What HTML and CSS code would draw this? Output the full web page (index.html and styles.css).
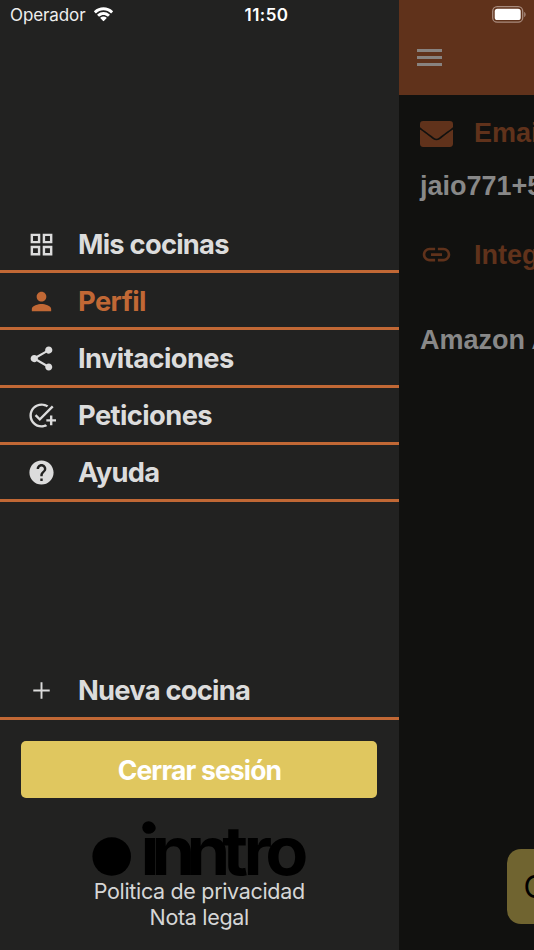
FILE: index.html
```html
<!DOCTYPE html>
<html lang="es">
<head>
<meta charset="utf-8">
<title>inntro</title>
<link rel="stylesheet" href="styles.css">
</head>
<body>
<div class="app">
  <aside class="drawer">
    <nav class="menu">
      <a class="item"><svg class="icon" viewBox="0 0 24 24"><path d="M3 3v8h8V3H3zm6 6H5V5h4v4zm-6 4v8h8v-8H3zm6 6H5v-4h4v4zm4-16v8h8V3h-8zm6 6h-4V5h4v4zm-6 4v8h8v-8h-8zm6 6h-4v-4h4v4z"/></svg><span class="l-mis">Mis cocinas</span></a>
      <a class="item active"><svg class="icon" viewBox="0 0 24 24"><path d="M12 12c2.21 0 4-1.79 4-4s-1.790-4-4-4-4 1.790-4 4 1.790 4 4 4zm0 2c-2.670 0-8 1.340-8 4v2h16v-2c0-2.660-5.330-4-8-4z"/></svg><span class="l-perfil">Perfil</span></a>
      <a class="item"><svg class="icon" viewBox="0 0 24 24"><path d="M18 16.080c-.76 0-1.440.3-1.960.77L8.910 12.700c.05-.23.09-.46.09-.7s-.04-.47-.09-.7l7.050-4.110c.54.5 1.250.81 2.040.81 1.660 0 3-1.340 3-3s-1.340-3-3-3-3 1.340-3 3c0 .24.04.47.09.7L8.040 9.810C7.500 9.310 6.790 9 6 9c-1.660 0-3 1.340-3 3s1.340 3 3 3c.79 0 1.500-.31 2.040-.81l7.120 4.160c-.05.21-.08.43-.08.65 0 1.610 1.310 2.920 2.920 2.920s2.920-1.310 2.920-2.920-1.310-2.920-2.920-2.920z"/></svg><span class="l-inv">Invitaciones</span></a>
      <a class="item"><svg class="icon" viewBox="0 0 24 24"><path d="M22 5.180 10.590 16.600l-4.240-4.240 1.410-1.410 2.830 2.830 10-10L22 5.180zM12 20c-4.410 0-8-3.590-8-8s3.590-8 8-8c1.570 0 3.040.46 4.280 1.250l1.450-1.450C16.100 2.670 14.130 2 12 2 6.480 2 2 6.480 2 12s4.480 10 10 10c1.730 0 3.360-.44 4.780-1.220l-1.500-1.500c-1 .46-2.110.72-3.280.72zm7-5h-3v2h3v3h2v-3h3v-2h-3v-3h-2v3z"/></svg><span class="l-pet">Peticiones</span></a>
      <a class="item"><svg class="icon" viewBox="0 0 24 24"><path d="M12 2C6.480 2 2 6.480 2 12s4.480 10 10 10 10-4.480 10-10S17.520 2 12 2zm1 17h-2v-2h2v2zm2.070-7.750-.9.920C13.450 12.900 13 13.500 13 15h-2v-.5c0-1.100.45-2.100 1.170-2.830l1.240-1.260c.37-.36.59-.86.59-1.410 0-1.100-.9-2-2-2s-2 .9-2 2H8c0-2.210 1.790-4 4-4s4 1.790 4 4c0 .88-.36 1.680-.93 2.250z"/></svg><span class="l-ayuda">Ayuda</span></a>
    </nav>
    <div class="bottom">
      <a class="item"><svg class="icon" viewBox="0 0 24 24"><path d="M18.800 12.800h-6v6h-1.600v-6h-6v-1.600h6v-6h1.600v6h6v1.600z"/></svg><span class="l-nueva">Nueva cocina</span></a>
      <button class="logout"><span>Cerrar sesión</span></button>
      <svg class="logo" viewBox="0 0 214 57">
        <circle cx="19.700" cy="35.500" r="19.300"/>
        <circle cx="56.600" cy="6.500" r="6.300"/>
        <text transform="scale(1.05 1)" x="46.200 56.600 89.900 124.100 144.200 164.900" y="54">inntro</text>
      </svg>
      <a class="link privacy">Politica de privacidad</a>
      <a class="link legal">Nota legal</a>
    </div>
  </aside>
  <main class="page">
    <header class="topbar"><div class="burger"><i></i><i></i><i></i></div></header>
    <section class="profile">
      <h2 class="heading"><svg class="mail" viewBox="0 0 512 400"><path d="M502 135c4-3 10 0 10 5v212a48 48 0 0 1-48 48H48a48 48 0 0 1-48-48V140c0-5 6-8 10-5 22 17 52 40 154 114 21 15 57 48 92 48s72-33 92-48c102-74 132-97 154-114zM256 272c23 0 57-29 73-42C462 134 472 126 503 102c6-5 9-12 9-19V48a48 48 0 0 0-48-48H48A48 48 0 0 0 0 48v35c0 7 3 14 9 19 31 24 41 32 174 128 16 13 50 42 73 42z"/></svg><span>Email</span></h2>
      <p class="value">jaio771+5@gmail.com</p>
      <h2 class="heading integ"><svg class="chain" viewBox="0 0 24 24"><path d="M3.900 12c0-1.710 1.390-3.100 3.100-3.100h4V7H7c-2.760 0-5 2.240-5 5s2.240 5 5 5h4v-1.900H7c-1.710 0-3.100-1.390-3.100-3.100zM8 13h8v-2H8v2zm9-6h-4v1.900h4c1.710 0 3.100 1.390 3.100 3.100s-1.390 3.100-3.100 3.100h-4V17h4c2.760 0 5-2.240 5-5s-2.240-5-5-5z"/></svg><span>Integraciones</span></h2>
      <p class="value amazon">Amazon Alexa</p>
    </section>
    <button class="action">C</button>
  </main>
</div>
<div class="status">
  <span class="carrier">Operador</span>
  <svg class="wifi" viewBox="0 0 21 16"><path d="M10.500 3.300c2.800 0 5.400 1.100 7.300 3 .2.200.4.200.6 0l1.400-1.500c.2-.2.200-.5 0-.7C14.700-.9 6.300-.9 1.200 4.100c-.2.200-.2.500 0 .7l1.400 1.500c.2.200.4.200.6 0 1.900-1.900 4.500-3 7.300-3zM10.500 8c1.500 0 3 .6 4.100 1.600.2.200.5.200.6 0l1.500-1.500c.2-.2.200-.5 0-.7-3.500-3.300-8.900-3.300-12.400 0-.2.200-.2.500 0 .7l1.500 1.500c.1.200.4.200.6 0C7.500 8.600 9 8 10.500 8zM13.500 11.300c.2-.2.200-.5 0-.7-1.700-1.500-4.300-1.500-6 0-.2.200-.2.500 0 .7l2.600 2.700c.2.200.6.200.8 0z"/></svg>
  <span class="time">11:50</span>
  <svg class="battery" viewBox="0 0 35 17"><rect x=".7" y=".7" width="30" height="15.500" rx="4.500" class="shell"/><rect x="2.700" y="2.800" width="26" height="11.300" rx="2.600" class="charge"/><path d="M32.200 6c1.900.6 1.900 4.400 0 5z" class="tip"/></svg>
</div>
</body>
</html>
```
FILE: styles.css
```css
* { box-sizing: border-box; }
body {
  margin: 0;
  height: 950px;
  overflow: hidden;
  background: #11110f;
  font-family: Inter, "Liberation Sans", sans-serif;
}
.app { display: flex; width: 534px; height: 950px; overflow: hidden; }
.drawer {
  flex: 0 0 398.5px;
  display: flex;
  flex-direction: column;
  justify-content: space-between;
  padding-top: 216.2px;
  background: #222221;
}
.item {
  display: flex;
  align-items: center;
  height: 57.15px;
  padding: 2px 0 0 27px;
  gap: 22px;
  border-bottom: 3px solid #c16835;
  color: #dcdcdc;
  font-size: 27.3px;
  font-weight: 700;
  line-height: 1;
  letter-spacing: -0.58px;
  white-space: nowrap;
}
.item.active { color: #c16835; }
.l-mis { letter-spacing: -0.75px; }
.l-nueva { letter-spacing: -0.75px; }
.l-ayuda { letter-spacing: -0.75px; }
.icon { width: 29px; height: 29px; flex: none; fill: currentColor; }
.bottom { display: flex; flex-direction: column; align-items: center; height: 287.2px; }
.bottom .item { align-self: stretch; flex: none; }
.logout {
  flex: none;
  width: 356px;
  height: 57px;
  margin: 21px 0 0 0.4px;
  padding: 1px 0 0;
  border: 0;
  border-radius: 5px;
  background: #e0c75f;
  color: #fff;
  font: 700 26.5px/1 Inter, sans-serif;
  letter-spacing: -0.85px;
}
.logo { flex: none; width: 214px; height: 57px; margin-top: 23px; overflow: visible; }
.logo text { font: 650 67px Inter, sans-serif; }
.link { color: #d6d6d6; font-size: 21.5px; line-height: 26px; letter-spacing: -0.33px; white-space: nowrap; }
.page {
  flex: 1;
  min-width: 0;
  display: flex;
  flex-direction: column;
  overflow: hidden;
  font-family: "Liberation Sans", sans-serif;
}
.topbar { height: 95px; flex: none; background: #60321b; padding: 49px 0 0 18.5px; }
.burger { display: flex; flex-direction: column; gap: 3.8px; width: 25px; }
.burger i { height: 3px; background: #888380; }
.profile { padding: 22px 0 0 21.5px; font-size: 27px; font-weight: bold; line-height: 32px; white-space: nowrap; }
.heading { display: flex; align-items: center; margin: 0; font-size: 27px; color: #60321b; }
.heading svg { width: 33px; flex: none; margin-right: 21px; fill: currentColor; }
.mail { height: 26px; margin-top: 1px; }
.chain { height: 33px; }
.value { margin: 21px 0 0; color: #888; }
.integ { margin-top: 36px; }
.amazon { margin-top: 53px; }
.action {
  align-self: flex-start;
  width: 160px;
  height: 75px;
  margin: auto 0 26px 108.5px;
  padding: 0 0 0 16.5px;
  flex: none;
  border: 0;
  border-radius: 14px;
  background: #706430;
  color: #000;
  font: 31px/1 Inter, sans-serif;
  text-align: left;
}
.status {
  position: absolute;
  top: 0;
  left: 0;
  width: 534px;
  height: 30px;
  display: flex;
  align-items: center;
  padding-left: 10px;
  color: #fff;
  font-size: 17px;
  line-height: 30px;
}
.carrier { width: 75px; color: #eee; letter-spacing: -0.1px; white-space: nowrap; }
.wifi { width: 21px; height: 16px; margin-left: 7.5px; fill: #fff; }
.time { margin-left: 131px; width: 45px; font-weight: 600; letter-spacing: 0.45px; white-space: nowrap; }
.battery { width: 35px; height: 17px; margin: -2px 7.5px 0 auto; }
.shell { fill: none; stroke: #a88b7d; stroke-width: 1.3; }
.charge { fill: #fff; }
.tip { fill: #a88b7d; }
```
